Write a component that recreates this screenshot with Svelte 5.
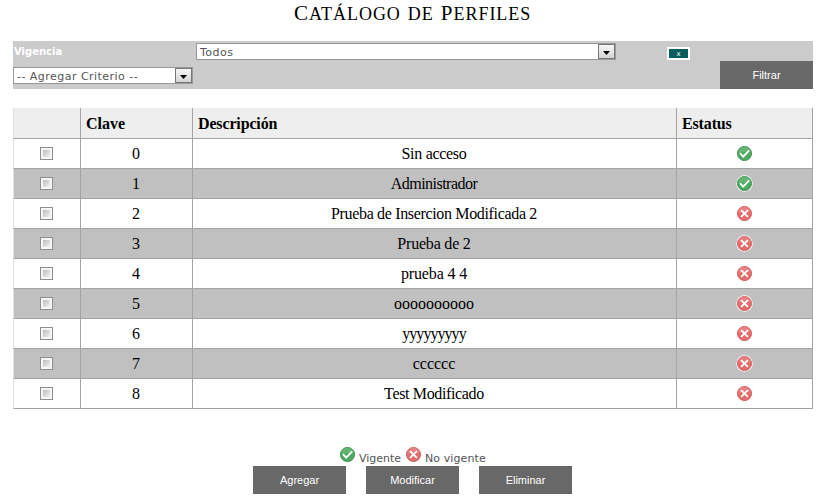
<script>
  const rows = [
    { name: 'Sin acceso', ok: true, tracking: -0.3 },
    { name: 'Administrador', ok: true, tracking: -0.52 },
    { name: 'Prueba de Insercion Modificada 2', ok: false, tracking: -0.34 },
    { name: 'Prueba de 2', ok: false, tracking: -0.2 },
    { name: 'prueba 4 4', ok: false, tracking: -0.15 },
    { name: 'oooooooooo', ok: false, tracking: 0 },
    { name: 'yyyyyyyyy', ok: false, tracking: -0.95 },
    { name: 'cccccc', ok: false, tracking: 0 },
    { name: 'Test Modificado', ok: false, tracking: -0.35 }
  ];
</script>

{#snippet status(ok)}
  <svg class="status" width="17" height="17" viewBox="0 0 17 17">
    <circle cx="8.5" cy="8.5" r="8.2" fill="#fff" />
    {#if ok}
      <circle cx="8.5" cy="8.5" r="7" fill="#4faa61" stroke="#398a4c" />
      <path d="M2.5 8a6 6 0 0 1 12-1Q8 6 2.5 8z" fill="#76bd80" opacity=".55" />
      <path d="M4 8.2l3.2 3.5 6-6.4" fill="none" stroke="#fff" stroke-width="1.9" />
    {:else}
      <circle cx="8.5" cy="8.5" r="7" fill="#e36c6c" stroke="#d05b5b" />
      <path d="M2.5 8a6 6 0 0 1 12-1Q8 6 2.5 8z" fill="#ef9292" opacity=".55" />
      <path d="M5.1 5.1l6.8 6.8M11.9 5.1l-6.8 6.8" fill="none" stroke="#fff" stroke-width="1.9" />
    {/if}
  </svg>
{/snippet}

{#snippet dropdown(label)}
  <span>{label}</span>
  <i><svg width="7" height="4" viewBox="0 0 7 4"><path d="M0 0h7L3.5 4z" fill="#000" /></svg></i>
{/snippet}

<main>
  <h1><big>C</big>atálogo de <big>P</big>erfiles</h1>

  <section class="filters">
    <div class="line first">
      <b>Vigencia</b>
      <div class="select wide">{@render dropdown('Todos')}</div>
      <button class="remove">x</button>
    </div>
    <div class="line second">
      <div class="select">{@render dropdown('-- Agregar Criterio --')}</div>
      <button class="action">Filtrar</button>
    </div>
  </section>

  <section class="table">
    <div class="row head">
      <div></div><div>Clave</div><div class="tight">Descripción</div><div class="tight">Estatus</div>
    </div>
    {#each rows as { name, ok, tracking }, i}
      <div class="row" class:odd={i % 2 === 1}>
        <div class="pick"><span class="check"></span></div>
        <div class="text">{i}</div>
        <div class="text" style:letter-spacing="{tracking}px">{name}</div>
        <div>{@render status(ok)}</div>
      </div>
    {/each}
  </section>

  <div class="legend">
    {@render status(true)}<span class="yes">Vigente</span>
    {@render status(false)}<span class="no">No vigente</span>
  </div>
  <div class="actions">
    <button class="action">Agregar</button>
    <button class="action">Modificar</button>
    <button class="action">Eliminar</button>
  </div>
</main>

<style>
  :global(body) { background: #fff; }
  main {
    width: 800px;
    height: 502px;
    padding-left: 13px;
    overflow: hidden;
    font: 11px/14px "DejaVu Sans", Verdana, sans-serif;
    color: #555;
  }
  h1 {
    height: 41px;
    margin: 0;
    padding: 1px 0 0 281px;
    box-sizing: border-box;
    font: 18px/26px "Liberation Serif", serif;
    text-transform: uppercase;
    letter-spacing: 0.98px;
    word-spacing: 1.5px;
    color: #000;
    white-space: nowrap;
  }
  big { font-size: 21px; line-height: 20px; }
  .filters { height: 48px; background: #cbcbcb; }
  .line { display: flex; align-items: flex-start; }
  .first { height: 20px; }
  .first b {
    width: 183px;
    padding: 4px 0 0 1px;
    box-sizing: border-box;
    font-size: 10px;
    color: #fff;
  }
  .select {
    display: flex;
    justify-content: space-between;
    width: 180px;
    height: 17px;
    margin-top: 6px;
    box-sizing: border-box;
    border: 1px solid #999;
    background: #fff;
    line-height: 17px;
    letter-spacing: 0.47px;
    white-space: nowrap;
  }
  .select span { padding-left: 3px; }
  .wide { width: 420px; margin-top: 2px; }
  .select i {
    display: flex;
    align-items: center;
    justify-content: center;
    width: 17px;
    height: 15px;
    box-sizing: border-box;
    padding-top: 3px;
    border: 1px solid #777;
    background: linear-gradient(#f6f6f6, #d4d4d4);
  }
  button { padding: 0; border: 0; border-radius: 0; color: #fff; }
  .remove {
    width: 23px;
    height: 13px;
    margin: 6px 0 0 51px;
    border: 2px solid #fff;
    background: #075c5c;
    font: 7px/8px "DejaVu Sans", sans-serif;
  }
  .second { justify-content: space-between; }
  .action {
    width: 93px;
    height: 28px;
    background: #686868;
    font: 11px/28px "Liberation Sans", Arial, sans-serif;
  }
  .table {
    margin-top: 19px;
    color: #000;
    font: 16px/30px "Liberation Serif", "Times New Roman", serif;
  }
  .row { display: grid; grid-template-columns: 68px 112px 484px 136px; }
  .row > div {
    display: flex;
    align-items: center;
    justify-content: center;
    height: 30px;
    box-sizing: border-box;
    border-right: 1px solid #a3a3a3;
    border-bottom: 1px solid #a3a3a3;
  }
  .row > div:first-child { border-left: 1px solid #e2e2e2; }
  .row > .text { padding: 1px 1px 0 0; }
  .row > .pick { padding-right: 2px; }
  .odd { background: #c0c0c0; }
  .head { background: #eee; font-weight: bold; }
  .head > div { height: 31px; justify-content: flex-start; padding: 2px 0 0 5px; }
  .tight { letter-spacing: -0.15px; }
  .check {
    width: 13px;
    height: 13px;
    box-sizing: border-box;
    border: 1px solid #8d8f8f;
    background: linear-gradient(135deg, #bbb, #f4f4f4) content-box, #f6f6f6;
    padding: 2px;
  }
  .status { display: block; flex: none; }
  .legend {
    display: flex;
    height: 20px;
    margin-top: 37px;
    padding-left: 326px;
    white-space: nowrap;
  }
  .legend span { padding-top: 6px; }
  .legend .yes { width: 49px; padding-left: 3px; box-sizing: border-box; }
  .legend .no { padding-left: 3px; letter-spacing: 0.1px; }
  .actions { display: flex; gap: 20px; padding-left: 240px; }
</style>
